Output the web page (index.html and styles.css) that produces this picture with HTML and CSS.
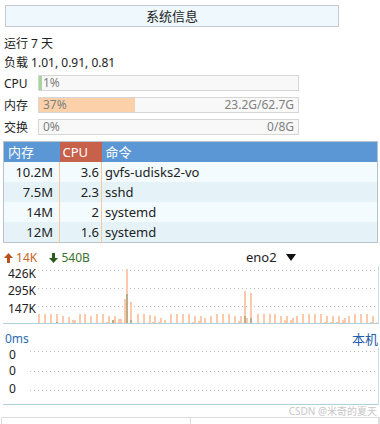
FILE: index.html
```html
<!DOCTYPE html>
<html lang="zh">
<head>
    <meta charset="UTF-8">
    <title>系统信息</title>
    <link rel="stylesheet" href="styles.css">
</head>
<body>
    <div class="panel">
        <div class="title">系统信息</div>
        <div class="line">运行 7 天</div>
        <div class="line">负载 1.01, 0.91, 0.81</div>

        <div class="meter">
            <span class="meter-label">CPU</span>
            <div class="bar">
                <div class="fill fill-cpu" style="width: 1%"></div>
                <span class="bar-text">1%</span>
            </div>
        </div>
        <div class="meter">
            <span class="meter-label">内存</span>
            <div class="bar">
                <div class="fill fill-mem" style="width: 37%"></div>
                <span class="bar-text">37%</span>
                <span class="bar-text">23.2G/62.7G</span>
            </div>
        </div>
        <div class="meter">
            <span class="meter-label">交换</span>
            <div class="bar">
                <div class="fill fill-mem" style="width: 0%"></div>
                <span class="bar-text">0%</span>
                <span class="bar-text">0/8G</span>
            </div>
        </div>

        <table class="procs">
            <colgroup>
                <col class="c-mem">
                <col class="c-cpu">
                <col>
            </colgroup>
            <thead>
                <tr>
                    <th>内存</th>
                    <th class="cpu-head">CPU</th>
                    <th>命令</th>
                </tr>
            </thead>
            <tbody>
                <tr><td class="num">10.2M</td><td class="num num-cpu">3.6</td><td class="cmd">gvfs-udisks2-vo</td></tr>
                <tr><td class="num">7.5M</td><td class="num num-cpu">2.3</td><td class="cmd">sshd</td></tr>
                <tr><td class="num">14M</td><td class="num num-cpu">2</td><td class="cmd">systemd</td></tr>
                <tr><td class="num">12M</td><td class="num num-cpu">1.6</td><td class="cmd">systemd</td></tr>
            </tbody>
        </table>

        <div class="net-head">
            <span class="up">
                <svg width="9" height="10" viewBox="0 0 9 10"><polygon points="4.5,0 9,5 6,5 6,10 3,10 3,5 0,5" fill="#b8521c"/></svg>
                14K
            </span>
            <span class="down">
                <svg width="9" height="10" viewBox="0 0 9 10"><polygon points="4.5,10 9,5 6,5 6,0 3,0 3,5 0,5" fill="#2b5c1e"/></svg>
                540B
            </span>
            <span class="iface">
                eno2
                <svg width="10" height="7" viewBox="0 0 10 7"><polygon points="0,0 10,0 5,7" fill="#111"/></svg>
            </span>
        </div>

        <div class="chart net-chart">
            <div class="axis net-axis">
                <span>426K</span>
                <span>295K</span>
                <span>147K</span>
            </div>
            <svg class="plot" width="339" height="57" viewBox="0 0 339 57">
                <g stroke="#bcbcbc" stroke-dasharray="1 3">
                    <line x1="0" y1="4.5" x2="339" y2="4.5"/>
                    <line x1="0" y1="22.5" x2="339" y2="22.5"/>
                    <line x1="0" y1="40.5" x2="339" y2="40.5"/>
                </g>
                <g fill="#fcc9ab">
                    <rect x="0" y="48" width="2" height="9"/>
                    <rect x="6" y="48" width="2" height="9"/>
                    <rect x="12" y="48" width="2" height="9"/>
                    <rect x="18" y="48" width="2" height="9"/>
                    <rect x="24" y="50" width="2" height="7"/>
                    <rect x="30" y="51" width="2" height="6"/>
                    <rect x="34" y="54" width="4" height="3"/>
                    <rect x="41" y="48" width="2" height="9"/>
                    <rect x="46" y="48" width="2" height="9"/>
                    <rect x="52" y="50" width="2" height="7"/>
                    <rect x="58" y="48" width="2" height="9"/>
                    <rect x="64" y="48" width="2" height="9"/>
                    <rect x="68" y="56" width="2" height="1"/>
                    <rect x="70" y="50" width="2" height="7"/>
                    <rect x="76" y="50" width="2" height="7"/>
                    <rect x="80" y="53" width="4" height="4"/>
                    <rect x="86" y="33" width="2" height="24"/>
                    <rect x="88" y="3" width="2" height="54"/>
                    <rect x="92" y="36" width="2" height="21"/>
                    <rect x="99" y="48" width="2" height="9"/>
                    <rect x="105" y="48" width="2" height="9"/>
                    <rect x="111" y="49" width="2" height="8"/>
                    <rect x="114" y="56" width="2" height="1"/>
                    <rect x="116" y="50" width="2" height="7"/>
                    <rect x="120" y="56" width="2" height="1"/>
                    <rect x="122" y="52" width="2" height="5"/>
                    <rect x="126" y="54" width="2" height="3"/>
                    <rect x="132" y="48" width="2" height="9"/>
                    <rect x="138" y="48" width="2" height="9"/>
                    <rect x="144" y="48" width="2" height="9"/>
                    <rect x="150" y="48" width="2" height="9"/>
                    <rect x="154" y="56" width="2" height="1"/>
                    <rect x="156" y="50" width="2" height="7"/>
                    <rect x="160" y="55" width="2" height="2"/>
                    <rect x="162" y="50" width="2" height="7"/>
                    <rect x="166" y="52" width="2" height="5"/>
                    <rect x="172" y="50" width="2" height="7"/>
                    <rect x="178" y="48" width="2" height="9"/>
                    <rect x="184" y="48" width="2" height="9"/>
                    <rect x="190" y="48" width="2" height="9"/>
                    <rect x="196" y="50" width="2" height="7"/>
                    <rect x="200" y="55" width="2" height="2"/>
                    <rect x="202" y="50" width="2" height="7"/>
                    <rect x="206" y="25" width="2" height="32"/>
                    <rect x="208" y="52" width="2" height="5"/>
                    <rect x="212" y="27" width="2" height="30"/>
                    <rect x="219" y="48" width="2" height="9"/>
                    <rect x="225" y="48" width="2" height="9"/>
                    <rect x="231" y="48" width="2" height="9"/>
                    <rect x="236" y="48" width="2" height="9"/>
                    <rect x="242" y="50" width="2" height="7"/>
                    <rect x="246" y="54" width="2" height="3"/>
                    <rect x="248" y="50" width="2" height="7"/>
                    <rect x="252" y="54" width="4" height="3"/>
                    <rect x="254" y="52" width="2" height="5"/>
                    <rect x="258" y="50" width="2" height="7"/>
                    <rect x="264" y="48" width="2" height="9"/>
                    <rect x="270" y="48" width="2" height="9"/>
                    <rect x="276" y="48" width="2" height="9"/>
                    <rect x="282" y="48" width="2" height="9"/>
                    <rect x="286" y="56" width="2" height="1"/>
                    <rect x="288" y="50" width="2" height="7"/>
                    <rect x="292" y="56" width="2" height="1"/>
                    <rect x="294" y="50" width="2" height="7"/>
                    <rect x="298" y="56" width="2" height="1"/>
                    <rect x="300" y="50" width="2" height="7"/>
                    <rect x="304" y="54" width="4" height="3"/>
                    <rect x="306" y="52" width="2" height="5"/>
                    <rect x="310" y="50" width="2" height="7"/>
                    <rect x="316" y="48" width="2" height="9"/>
                    <rect x="322" y="48" width="2" height="9"/>
                    <rect x="328" y="48" width="2" height="9"/>
                    <rect x="332" y="56" width="2" height="1"/>
                    <rect x="334" y="50" width="2" height="7"/>
                    <rect x="338" y="56" width="1" height="1"/>
                </g>
                <g fill="#bcad86">
                    <rect x="18" y="56" width="2" height="1"/>
                    <rect x="74" y="54" width="2" height="3"/>
                    <rect x="88" y="28" width="2" height="29"/>
                    <rect x="92" y="54" width="2" height="3"/>
                    <rect x="206" y="50" width="2" height="7"/>
                    <rect x="212" y="52" width="2" height="5"/>
                </g>
            </svg>
        </div>

        <div class="lat-head">
            <span class="lat-ms">0ms</span>
            <span class="lat-host">本机</span>
        </div>

        <div class="chart lat-chart">
            <div class="axis lat-axis">
                <span>0</span>
                <span>0</span>
                <span>0</span>
            </div>
            <svg class="plot" width="347" height="56" viewBox="0 0 347 56">
                <g stroke="#bcbcbc" stroke-dasharray="1 3">
                    <line x1="0" y1="3.5" x2="347" y2="3.5"/>
                    <line x1="0" y1="23.5" x2="347" y2="23.5"/>
                    <line x1="0" y1="42.5" x2="347" y2="42.5"/>
                </g>
            </svg>
        </div>

        <div class="mark">CSDN @米奇的夏天</div>

        <div class="next-box">
            <div class="next-cell"></div>
            <div class="next-cell"></div>
        </div>
    </div>
</body>
</html>
```

FILE: styles.css
```css
html {
    overflow: hidden;
}
body {
    font-family: 'Noto Sans', 'Noto Sans CJK SC', sans-serif;
    font-size: 12px;
    color: #222;
    background: #fff;
    margin: 0;
    padding: 0;
}
.panel {
    padding: 5px 0 0 4px;
}
.title {
    margin: 0 41px 0 1px;
    height: 22px;
    box-sizing: border-box;
    border: 1px solid #c9c9c9;
    background: #eef8fd;
    text-align: center;
    font-size: 13px;
    line-height: 20px;
}
.line {
    height: 19px;
    line-height: 19px;
}
.title + .line {
    margin-top: 7px;
}
.meter {
    display: flex;
    align-items: center;
    height: 16px;
    margin-top: 6px;
}
.line + .meter {
    margin-top: 3px;
}
.meter-label {
    width: 34px;
}
.bar {
    position: relative;
    display: flex;
    justify-content: space-between;
    align-items: center;
    width: 261px;
    height: 16px;
    box-sizing: border-box;
    border: 1px solid #d6d6d6;
    background: #f8f8f8;
    padding: 0 4px;
}
.fill {
    position: absolute;
    left: 0;
    top: 0;
    bottom: 0;
}
.fill-cpu {
    background: #a3d59d;
    min-width: 2px;
}
.fill-mem {
    background: #fcd0a9;
}
.bar-text {
    position: relative;
    color: #808080;
    line-height: 14px;
}
.procs {
    width: 375px;
    margin: 6px 0 0 -1px;
    border-collapse: collapse;
    table-layout: fixed;
    border: 1px solid #b9c3c9;
    font-size: 13px;
}
.c-mem {
    width: 56px;
}
.c-cpu {
    width: 42px;
}
.procs th {
    height: 20px;
    padding: 0 4px;
    background: #5a97d4;
    color: #fff;
    font-weight: normal;
    text-align: left;
    line-height: 20px;
}
.procs th.cpu-head {
    background: #c8614b;
    padding-left: 3px;
}
.procs td {
    height: 20px;
    padding: 0;
    line-height: 20px;
}
.procs tbody tr:nth-child(odd) {
    background: #f3fbfe;
}
.procs tbody tr:nth-child(even) {
    background: #e5f3f9;
}
.num {
    text-align: right;
    padding-right: 6px !important;
    border-right: 1px solid #f6c89b;
}
.num-cpu {
    padding-right: 2px !important;
}
.cmd {
    padding-left: 3px !important;
    white-space: nowrap;
}
.net-head {
    display: flex;
    align-items: center;
    height: 18px;
    margin-top: 5px;
}
.net-head svg {
    vertical-align: -1px;
}
.up {
    color: #c8651f;
}
.down {
    color: #3a7430;
    margin-left: 12px;
}
.iface {
    margin-left: auto;
    margin-right: 84px;
    font-size: 13px;
}
.iface svg {
    margin-left: 6px;
    vertical-align: 1px;
}
.chart {
    display: flex;
    margin-left: -1px;
    width: 375px;
    border-right: 1px solid #c7dde4;
    border-bottom: 1px solid #b1d0dc;
}
.plot {
    display: block;
}
.axis {
    display: grid;
}
.net-axis {
    width: 33px;
    padding-right: 2px;
    grid-template-rows: 16px 18px 17px;
    text-align: right;
    align-items: center;
    line-height: 14px;
}
.lat-head {
    display: flex;
    justify-content: space-between;
    align-items: center;
    height: 18px;
    margin-top: 5px;
    margin-bottom: 1px;
    padding-left: 1px;
    padding-right: 2px;
    color: #2c6cb4;
}
.lat-host {
    color: #1f5ea8;
    font-size: 13px;
}
.lat-chart {
    height: 56px;
}
.lat-axis {
    width: 21px;
    padding-left: 6px;
    grid-template-rows: 14px 18px 18px;
    align-items: center;
    line-height: 12px;
}
.mark {
    height: 12px;
    line-height: 12px;
    text-align: right;
    padding-right: 3px;
    font-size: 10px;
    color: #c8c8c8;
}
.next-box {
    display: flex;
    margin-left: -3px;
    height: 6px;
    border: 1px solid #dcdcdc;
    border-bottom: none;
}
.next-cell {
    width: 285px;
    border-right: 1px solid #dcdcdc;
}
```
